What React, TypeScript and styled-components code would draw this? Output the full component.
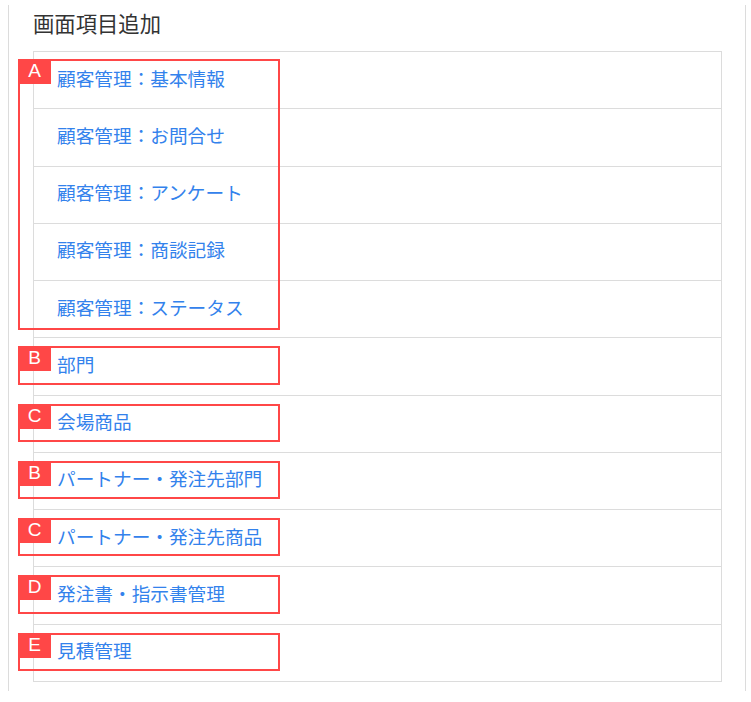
import React from "react";
import styled, { createGlobalStyle } from "styled-components";

const Global = createGlobalStyle`
  html, body { margin: 0; padding: 0; background: #fff; }
  body { font-family: "Noto Sans CJK JP", "Noto Sans", sans-serif; }
`;

const Panel = styled.div`
  margin: 5px 0 0 8px;
  width: 738px;
  height: 686px;
  box-sizing: border-box;
  border-left: 1px solid #dcdcdc;
  border-right: 1px solid #dcdcdc;
  padding: 2px 23px 0 24px;
`;

const Title = styled.h2`
  margin: 0;
  height: 44px;
  font-size: 21.33px;
  line-height: 32px;
  font-weight: 400;
  color: #333;
`;

const List = styled.div`
  border: 1px solid #dcdcdc;
  border-bottom: none;
`;

const Group = styled.div`
  position: relative;
`;

const Row = styled.a`
  display: flex;
  align-items: center;
  box-sizing: border-box;
  height: 57.25px;
  border-bottom: 1px solid #dcdcdc;
  padding: 0 0 6px 23px;
  font-size: 18.67px;
  color: #3382ec;
  text-decoration: none;
  cursor: pointer;
`;

const Frame = styled.div<{ $top: number; $bottom: number }>`
  position: absolute;
  left: -16px;
  width: 262px;
  top: ${(p) => p.$top}px;
  bottom: ${(p) => p.$bottom}px;
  box-sizing: border-box;
  border: 2px solid #ff4747;
  pointer-events: none;
`;

const Badge = styled.span`
  position: absolute;
  left: -2px;
  top: -2px;
  width: 33px;
  height: 25px;
  background: #ff4747;
  color: #fff;
  font-family: "Liberation Sans", Arial, sans-serif;
  font-size: 19px;
  line-height: 24px;
  text-align: center;
`;

type G = { label: string; items: string[] };

const groups: G[] = [
  {
    label: "A",
    items: [
      "顧客管理：基本情報",
      "顧客管理：お問合せ",
      "顧客管理：アンケート",
      "顧客管理：商談記録",
      "顧客管理：ステータス",
    ],
  },
  { label: "B", items: ["部門"] },
  { label: "C", items: ["会場商品"] },
  { label: "B", items: ["パートナー・発注先部門"] },
  { label: "C", items: ["パートナー・発注先商品"] },
  { label: "D", items: ["発注書・指示書管理"] },
  { label: "E", items: ["見積管理"] },
];

export default function App() {
  return (
    <>
      <Global />
      <Panel>
        <Title>画面項目追加</Title>
        <List>
          {groups.map((g, i) => (
            <Group key={i}>
              {g.items.map((t) => (
                <Row key={t}>{t}</Row>
              ))}
              <Frame $top={g.items.length > 1 ? 7 : 8} $bottom={g.items.length > 1 ? 8 : 11}>
                <Badge>{g.label}</Badge>
              </Frame>
            </Group>
          ))}
        </List>
      </Panel>
    </>
  );
}
